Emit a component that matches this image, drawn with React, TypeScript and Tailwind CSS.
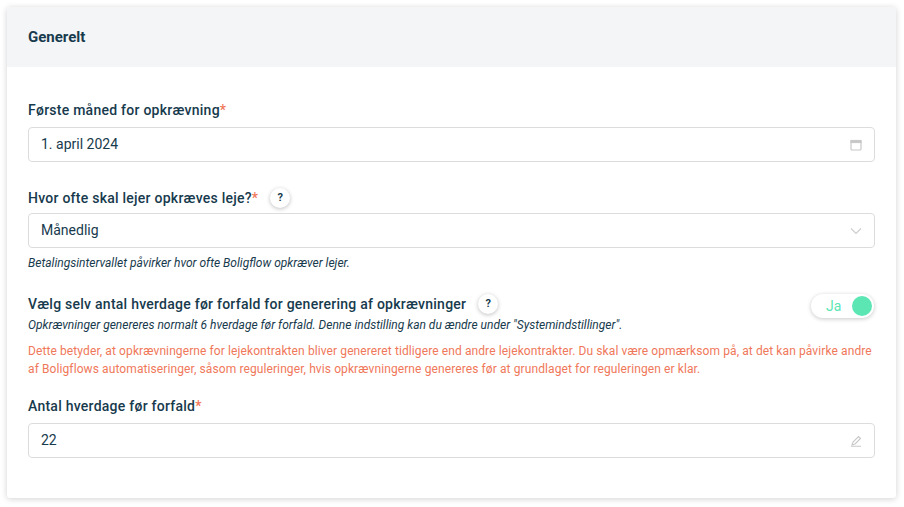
export default function App() {
  const font = { fontFamily: 'Roboto, "Liberation Sans", sans-serif' };
  const Help = () => (
    <span className="ml-3 inline-flex h-5 w-5 items-center justify-center rounded-full bg-white text-[11px] font-bold text-[#173a4d] shadow-[0_1px_4px_rgba(0,0,0,0.25)]">?</span>
  );
  const Star = () => <span className="text-[#f0785a]">*</span>;
  return (
    <div className="h-[507px] w-[904px] bg-white p-[7px]" style={font}>
      <div className="h-[491px] w-[889px] overflow-hidden rounded-[3px] bg-white shadow-[0_1px_6px_rgba(0,0,0,0.18)]">
        <div className="flex h-[60px] items-center bg-[#f4f5f7] px-[21px] text-[15px] font-bold text-[#173a4d]">Generelt</div>
        <div className="px-[21px] pt-[33px] text-[#173a4d]">
          <div className="flex h-[20px] items-center text-[14px] font-medium tracking-[0.25px]">Første måned for opkrævning<Star /></div>
          <div className="mt-[7px] flex h-[35px] items-center justify-between rounded-[4px] border border-[#dcdcdc] px-3 text-[14px]">
            <span>1. april 2024</span>
            <svg width="12" height="12" viewBox="0 0 12 12" fill="none" stroke="#c8c8c8" strokeWidth="1.2"><rect x="1" y="1.5" width="10" height="9.5" rx="1" /><rect x="1" y="1.5" width="10" height="2" fill="#c8c8c8" /></svg>
          </div>
          <div className="mt-[23px] flex h-[26px] items-center text-[14px] font-medium tracking-[0.25px]">Hvor ofte skal lejer opkræves leje?<Star /><Help /></div>
          <div className="mt-[2px] flex h-[35px] items-center justify-between rounded-[4px] border border-[#dcdcdc] px-3 text-[14px]">
            <span>Månedlig</span>
            <svg width="12" height="8" viewBox="0 0 12 8" fill="none" stroke="#cfcfcf" strokeWidth="1.2"><path d="M1 1.5l5 5 5-5" /></svg>
          </div>
          <div className="mt-[6px] text-[12px] italic">Betalingsintervallet påvirker hvor ofte Boligflow opkræver lejer.</div>
          <div className="mt-[21px] flex items-start justify-between">
            <div>
              <div className="flex h-[22px] items-center text-[14px] font-medium tracking-[0.25px]">Vælg selv antal hverdage før forfald for generering af opkrævninger<Help /></div>
              <div className="mt-[1px] text-[12px] italic">Opkrævninger genereres normalt 6 hverdage før forfald. Denne indstilling kan du ændre under "Systemindstillinger".</div>
            </div>
            <div className="mr-[1px] mt-[1px] flex h-[24px] w-[63px] items-center justify-between rounded-full bg-white pl-[15px] pr-[2px] shadow-[0_1px_4px_rgba(0,0,0,0.22)]">
              <span className="text-[14px] text-[#5be6b4]">Ja</span>
              <span className="h-[20px] w-[20px] rounded-full bg-[#5be6b4]" />
            </div>
          </div>
          <div className="mt-[8px] text-[12px] leading-[18px] tracking-[0.1px] text-[#f0785a]">Dette betyder, at opkrævningerne for lejekontrakten bliver genereret tidligere end andre lejekontrakter. Du skal være opmærksom på, at det kan påvirke andre af Boligflows automatiseringer, såsom reguleringer, hvis opkrævningerne genereres før at grundlaget for reguleringen er klar.</div>
          <div className="mt-[18px] flex h-[20px] items-center text-[14px] font-medium tracking-[0.25px]">Antal hverdage før forfald<Star /></div>
          <div className="mt-[7px] flex h-[35px] items-center justify-between rounded-[4px] border border-[#dcdcdc] px-3 text-[14px]">
            <span>22</span>
            <svg width="12" height="12" viewBox="0 0 12 12" fill="none" stroke="#c8c8c8" strokeWidth="1.1"><path d="M2 10l1-3 5.5-5.5 2 2L5 9z" /><path d="M1 11.2h10" /></svg>
          </div>
        </div>
      </div>
    </div>
  );
}
